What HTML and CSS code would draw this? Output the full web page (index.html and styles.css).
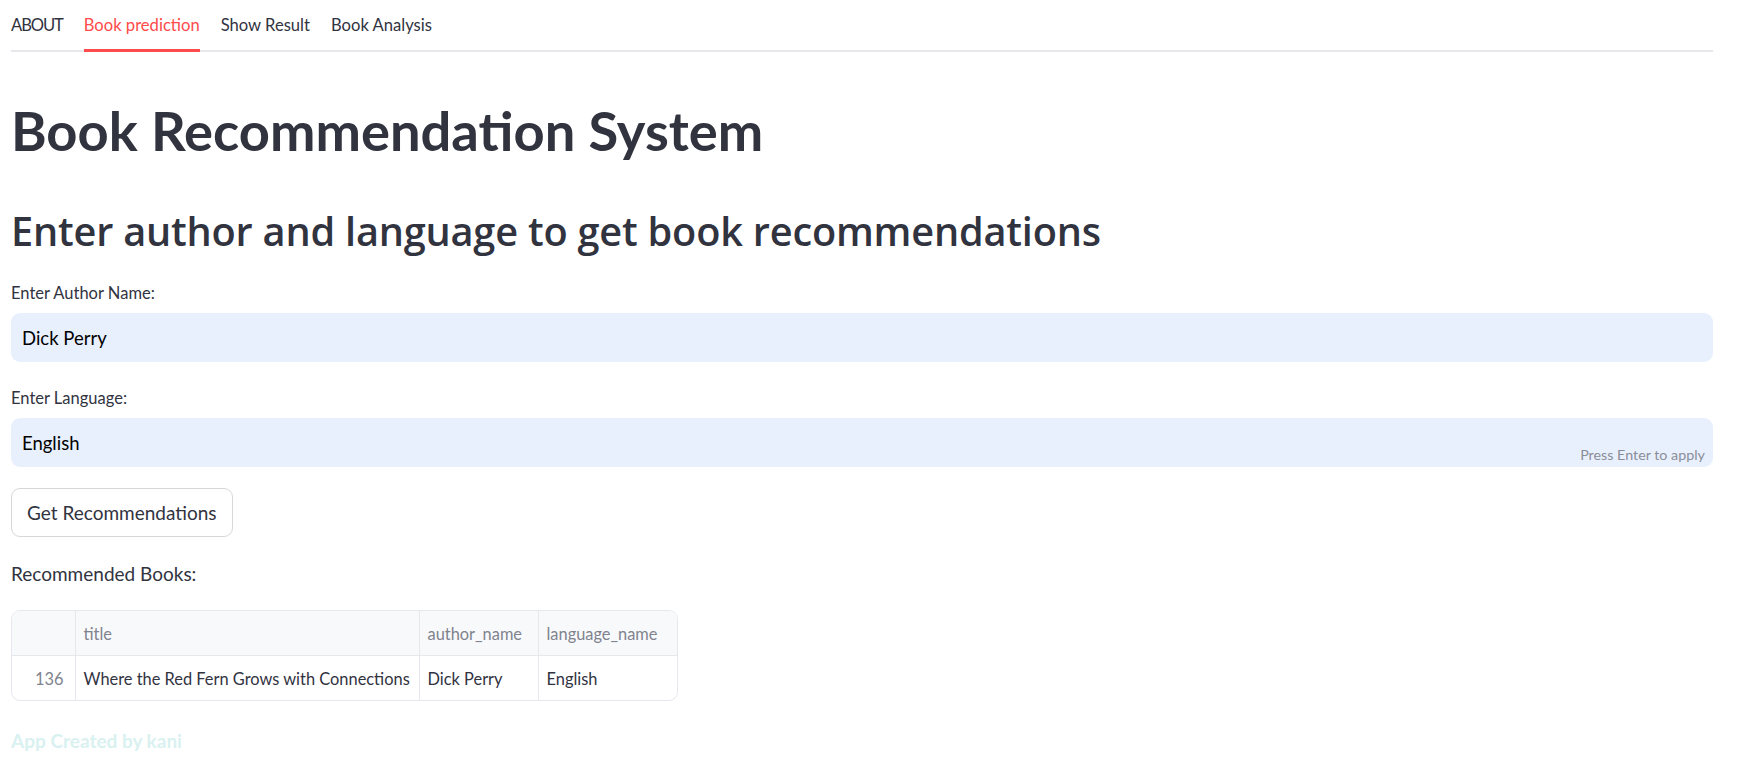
FILE: index.html
```html
<!DOCTYPE html>
<html lang="en">
<head>
<meta charset="utf-8">
<title>Book Recommendation System</title>
<link rel="stylesheet" href="styles.css">
</head>
<body>
<div class="page">
  <nav class="tabs">
    <div class="tab caps">ABOUT</div>
    <div class="tab active">Book prediction</div>
    <div class="tab">Show Result</div>
    <div class="tab">Book Analysis</div>
  </nav>
  <h1 class="title">Book Recommendation System</h1>
  <h2 class="subtitle">Enter author and language to get book recommendations</h2>
  <label class="label">Enter Author Name:</label>
  <div class="field"><span class="value">Dick Perry</span></div>
  <label class="label label-2">Enter Language:</label>
  <div class="field"><span class="value">English</span><span class="hint">Press Enter to apply</span></div>
  <div class="btn-row"><button class="btn">Get Recommendations</button></div>
  <p class="result-label">Recommended Books:</p>
  <div class="table-wrap">
    <table class="grid">
      <colgroup>
        <col class="w-idx"><col class="w-title"><col class="w-author"><col class="w-lang">
      </colgroup>
      <thead>
        <tr><th class="idx"></th><th>title</th><th>author_name</th><th>language_name</th></tr>
      </thead>
      <tbody>
        <tr><td class="idx">136</td><td>Where the Red Fern Grows with Connections</td><td>Dick Perry</td><td>English</td></tr>
      </tbody>
    </table>
  </div>
  <div class="footer">App Created by kani</div>
</div>
</body>
</html>
```
FILE: styles.css
```css
html, body {
  margin: 0;
  padding: 0;
  background: #ffffff;
}
body {
  font-family: "Lato", "Noto Sans", sans-serif;
  color: #31333f;
}
.page {
  padding: 0 42px 0 11px;
  display: flex;
  flex-direction: column;
  align-items: stretch;
}
.tabs {
  display: flex;
  gap: 21px;
  height: 50px;
  border-bottom: 2px solid #e8e8ec;
}
.tab {
  position: relative;
  font-size: 16.6px;
  line-height: 50px;
  color: #31333f;
  white-space: nowrap;
}
.tab.caps {
  letter-spacing: -1.1px;
}
.tab.active {
  color: #ff4b4b;
}
.tab.active::after {
  content: "";
  position: absolute;
  left: 0;
  right: 0;
  bottom: -2px;
  height: 3px;
  background: #ff4b4b;
}
.title {
  margin: 46px 0 0 0;
  font-size: 54.3px;
  line-height: 64.8px;
  font-weight: 700;
  color: #31333f;
}
.subtitle {
  margin: 46px 0 0 0;
  font-family: "Open Sans", "Lato", sans-serif;
  font-size: 39.7px;
  line-height: 45.6px;
  font-weight: 600;
  letter-spacing: -0.2px;
  color: #31333f;
}
.label {
  display: block;
  margin-top: 29px;
  font-size: 16.5px;
  line-height: 20px;
  color: #31333f;
}
.label-2 {
  margin-top: 26px;
}
.field {
  margin-top: 10px;
  height: 49px;
  border-radius: 9px;
  background: #e8f0fe;
  display: flex;
  align-items: center;
  justify-content: space-between;
  padding: 0 8px 0 11px;
}
.value {
  font-size: 18.5px;
  color: #000000;
}
.hint {
  align-self: flex-end;
  font-size: 14.3px;
  line-height: 16px;
  margin-bottom: 4px;
  color: #8a8d98;
}
.btn-row {
  display: flex;
  margin-top: 21px;
}
.btn {
  font-family: "Lato", "Noto Sans", sans-serif;
  font-size: 19px;
  color: #31333f;
  background: #ffffff;
  border: 1px solid #d6d7db;
  border-radius: 9px;
  height: 49px;
  padding: 0 15px;
}
.result-label {
  margin: 25px 0 0 0;
  font-size: 19px;
  line-height: 23px;
  color: #31333f;
}
.table-wrap {
  align-self: flex-start;
  margin-top: 25px;
  border: 1px solid #e6e8ee;
  border-radius: 9px;
  overflow: hidden;
}
.grid {
  border-collapse: collapse;
  table-layout: fixed;
  width: 665px;
  font-size: 16.4px;
}
.w-idx { width: 63px; }
.w-title { width: 344px; }
.w-author { width: 119px; }
.w-lang { width: 139px; }
.grid th, .grid td {
  height: 44px;
  padding: 0 8px;
  text-align: left;
  font-weight: 400;
  white-space: nowrap;
  overflow: hidden;
  border-left: 1px solid #e6e8ee;
}
.grid th:first-child, .grid td:first-child {
  border-left: none;
}
.grid thead th {
  background: #f8f9fb;
  color: #80838e;
  border-bottom: 1px solid #e6e8ee;
}
.grid td {
  color: #31333f;
}
.grid td.idx {
  text-align: right;
  color: #80838e;
  padding-right: 11px;
}
.footer {
  margin-top: 28px;
  font-size: 19px;
  line-height: 23px;
  font-weight: 700;
  color: #d9f1f0;
}
```
